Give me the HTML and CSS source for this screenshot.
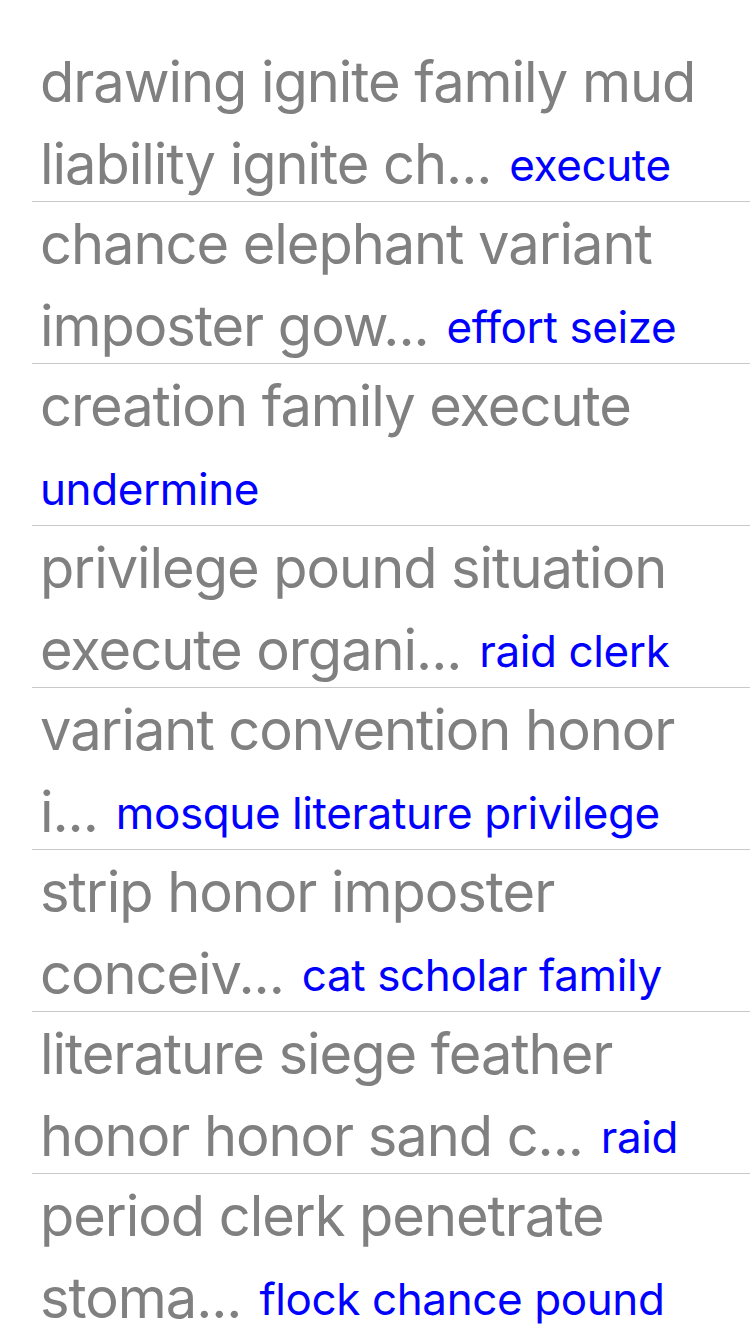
FILE: index.html
```html
<!DOCTYPE html>
<html>
<head>
<meta charset="utf-8">
<link rel="stylesheet" href="styles.css">
</head>
<body>
<div class="list">
  <div class="item">
    <div class="line">drawing ignite family mud</div>
    <div class="line">liability ignite ch...<span class="tag">execute</span></div>
  </div>
  <div class="item">
    <div class="line">chance elephant variant</div>
    <div class="line">imposter gow...<span class="tag">effort seize</span></div>
  </div>
  <div class="item">
    <div class="line">creation family execute</div>
    <div class="line"><span class="tag first">undermine</span></div>
  </div>
  <div class="item">
    <div class="line">privilege pound situation</div>
    <div class="line">execute organi...<span class="tag">raid clerk</span></div>
  </div>
  <div class="item">
    <div class="line">variant convention honor</div>
    <div class="line">i...<span class="tag">mosque literature privilege</span></div>
  </div>
  <div class="item">
    <div class="line">strip honor imposter</div>
    <div class="line">conceiv...<span class="tag">cat scholar family</span></div>
  </div>
  <div class="item">
    <div class="line">literature siege feather</div>
    <div class="line">honor honor sand c...<span class="tag">raid</span></div>
  </div>
  <div class="item">
    <div class="line">period clerk penetrate</div>
    <div class="line">stoma...<span class="tag">flock chance pound</span></div>
  </div>
</div>
</body>
</html>
```
FILE: styles.css
```css
html, body {
  margin: 0;
  padding: 0;
  background: #ffffff;
}
body {
  font-family: Inter, "Noto Sans", sans-serif;
  width: 750px;
  height: 1334px;
  overflow: hidden;
}
.list {
  padding-top: 40px;
}
.item {
  margin-left: 32px;
  padding-left: 8px;
  height: 161px;
  border-bottom: 1px solid #c8c7cc;
  box-sizing: content-box;
}
.line {
  font-size: 56px;
  line-height: 80px;
  color: #808080;
  white-space: nowrap;
  letter-spacing: -1.05px;
  padding-top: 2px;
}
.tag {
  font-size: 44px;
  color: #0000ff;
  margin-left: 18px;
  letter-spacing: -0.4px;
  vertical-align: 3px;
}
.tag.first {
  margin-left: 0;
}
```
